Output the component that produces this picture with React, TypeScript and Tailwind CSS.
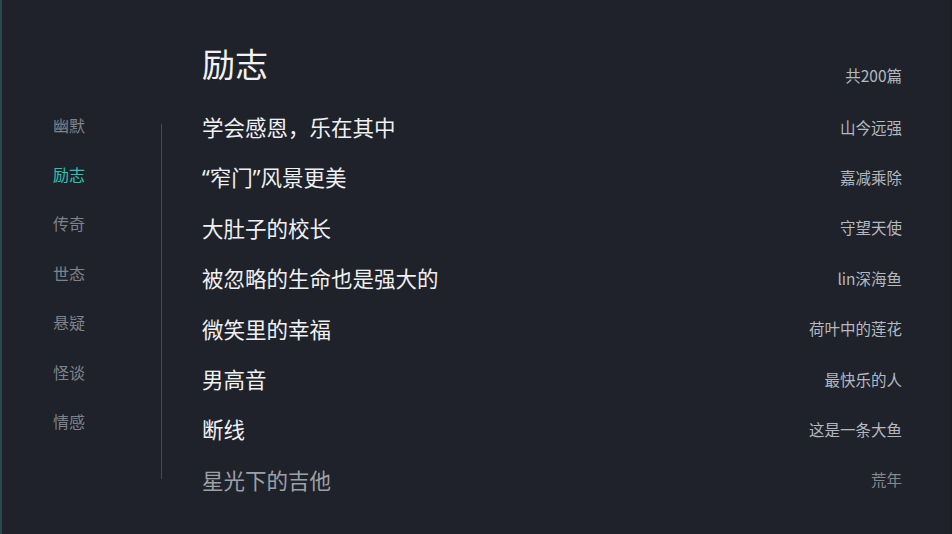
const categories = ["幽默", "励志", "传奇", "世态", "悬疑", "怪谈", "情感"];

const articles = [
  { title: "学会感恩，乐在其中", author: "山今远强" },
  { title: "“窄门”风景更美", author: "嘉减乘除" },
  { title: "大肚子的校长", author: "守望天使" },
  { title: "被忽略的生命也是强大的", author: "lin深海鱼" },
  { title: "微笑里的幸福", author: "荷叶中的莲花" },
  { title: "男高音", author: "最快乐的人" },
  { title: "断线", author: "这是一条大鱼" },
  { title: "星光下的吉他", author: "荒年" },
];

// quotes in the reference are narrow latin ones, not full-width
function Title({ text }: { text: string }) {
  const parts = text.split(/([“”])/);
  return (
    <>
      {parts.map((p, i) =>
        p === "“" || p === "”" ? (
          <span key={i} style={{ fontFamily: '"Noto Sans", sans-serif' }}>
            {p}
          </span>
        ) : (
          <span key={i}>{p}</span>
        )
      )}
    </>
  );
}

export default function App() {
  return (
    <div
      className="w-[952px] h-[534px] bg-[#1f222b] flex border-l-2 border-r-2 border-l-[#2b4a4d] border-r-[#1a1d24] overflow-hidden"
      style={{ fontFamily: '"Noto Sans CJK SC", "Noto Sans", sans-serif' }}
    >
      {/* category sidebar */}
      <div className="w-[159px] shrink-0 pt-[118px]">
        <div className="h-[330px] overflow-hidden">
          <div className="-mt-[18px] pl-[51px]">
            {categories.map((c) => (
              <div
                key={c}
                className={`h-[49.4px] flex items-center text-[16px] ${
                  c === "励志" ? "text-[#2fc2b4]" : "text-[#7e828a]"
                }`}
              >
                {c}
              </div>
            ))}
          </div>
        </div>
      </div>

      <div className="pt-[124px] shrink-0">
        <div className="w-px h-[355px] bg-[#454a56]" />
      </div>

      {/* article list */}
      <div className="flex-1 pl-[40px] pr-[48px] pt-[38px]">
        <div className="flex items-end justify-between">
          <div className="h-[50px] leading-[50px] text-[33px] text-[#f2f2f2]">励志</div>
          <div className="h-[26px] leading-[26px] text-[15.5px] text-[#b4b8bf]">共200篇</div>
        </div>
        <div className="mt-[14px]">
          {articles.map((a, i) => {
            const last = i === articles.length - 1;
            return (
              <div key={a.title} className="h-[50.4px] flex items-center justify-between">
                <span className={`text-[21.5px] ${last ? "text-[#9da0a7]" : "text-[#f0f0f0]"}`}>
                  <Title text={a.title} />
                </span>
                <span className={`text-[15.5px] ${last ? "text-[#858890]" : "text-[#b4b8bf]"}`}>
                  {a.author}
                </span>
              </div>
            );
          })}
        </div>
      </div>
    </div>
  );
}
